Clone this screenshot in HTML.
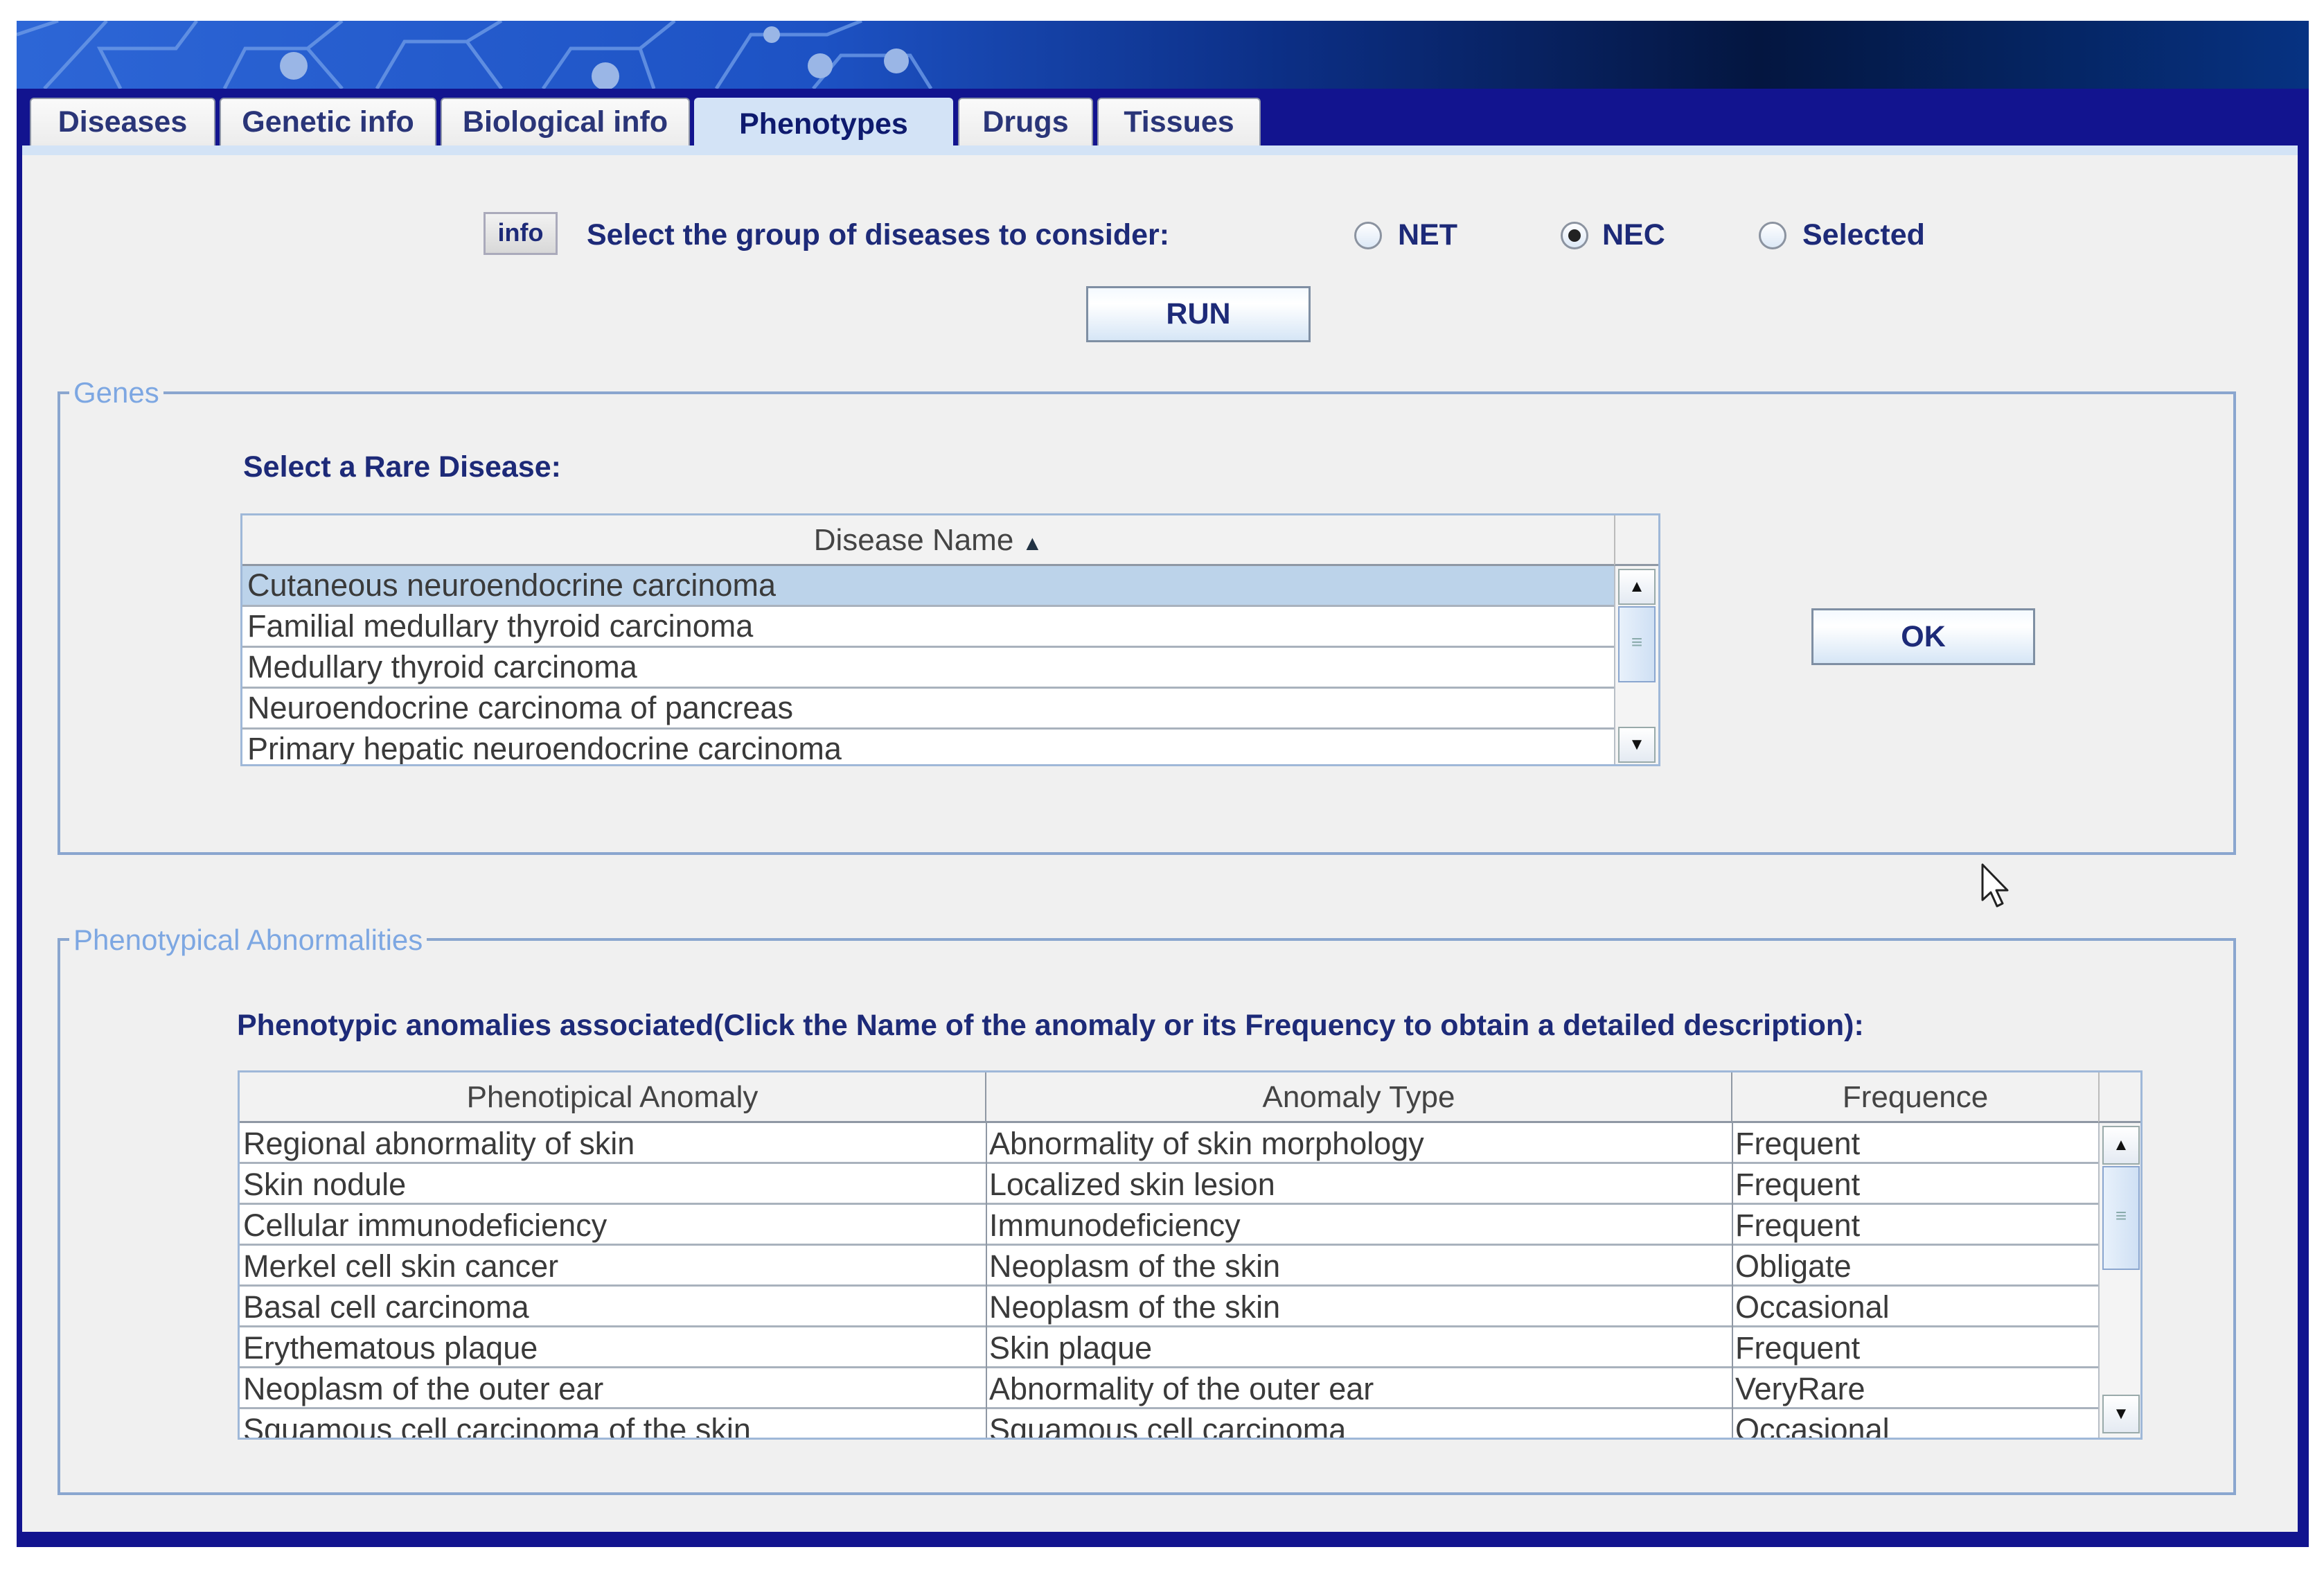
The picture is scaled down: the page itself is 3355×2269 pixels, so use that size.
<!DOCTYPE html>
<html><head><meta charset="utf-8"><style>
*{margin:0;padding:0;box-sizing:border-box}
body{width:3355px;height:2269px;background:#fff;position:relative;overflow:hidden;font-family:"Liberation Sans",Arial,sans-serif}
.a{position:absolute}
.b{font-weight:bold;color:#1d2a78;font-size:43px;white-space:nowrap}
.tab{position:absolute;top:141px;height:69px;background:linear-gradient(#fafafa,#ececec);border:2px solid #8f96a8;border-bottom:none;border-radius:6px 6px 0 0;font-weight:bold;font-size:43px;color:#2a3578;text-align:center;line-height:66px}
.btn{position:absolute;border:3px solid #7f8fa3;background:linear-gradient(#f4f9ff,#ffffff 30%,#d6e6f6);font-weight:bold;color:#1d2a78;text-align:center}
.fs{position:absolute;border:4px solid #8aa6cf}
.lg{position:absolute;background:#f0f0f0;color:#7da7e2;font-size:42px;padding:0 6px;white-space:nowrap;line-height:42px}
.tbl{position:absolute;background:#fff;border:3px solid #9fb8d8}
.row{position:absolute;left:0;height:59px;border-bottom:3px solid #a9b2bd;font-size:45px;color:#3a3a3a;line-height:56px;white-space:nowrap;overflow:hidden}
.hd{position:absolute;top:0;height:73px;background:#f2f2f2;border-bottom:3px solid #8f98a4;font-size:44px;color:#444;text-align:center;line-height:72px}
.sb{position:absolute;background:#f4f4f4;border-left:2px solid #b8bec6}
.radio{position:absolute;width:40px;height:40px;border-radius:50%;border:3px solid #8b93a0;background:linear-gradient(#fff,#dce8f6)}
.col{position:absolute;top:0;font-size:45px;color:#3a3a3a;line-height:59px;white-space:nowrap}
</style></head><body>
<div class="a" style="left:24px;top:30px;width:3309px;height:2203px;background:#12148f"></div>
<svg class="a" style="left:24px;top:30px" width="3309" height="98">
<defs><linearGradient id="g" x1="0" x2="1"><stop offset="0" stop-color="#2d66d6"/><stop offset="0.35" stop-color="#1d52c4"/><stop offset="0.55" stop-color="#0c2f86"/><stop offset="0.76" stop-color="#041640"/><stop offset="1" stop-color="#063282"/></linearGradient></defs>
<rect width="3309" height="98" fill="url(#g)"/>
<g stroke="#6d9ae6" stroke-width="5" fill="none" opacity="0.8">
<path d="M0 20 L60 0 M40 98 L130 0 M150 98 L120 40 L230 40 L260 0 M300 98 L330 40 L420 40 L470 0 M420 40 L470 98 M520 98 L560 30 L650 30 L700 0 M650 30 L700 98 M760 98 L800 40 L900 40 L950 0 M900 40 L920 98 M1010 98 L1060 20 L1170 20 L1220 0 M1150 98 L1190 50 L1290 50 L1320 98"/>
</g>
<g fill="#9ab6e6"><circle cx="400" cy="65" r="20"/><circle cx="850" cy="80" r="20"/><circle cx="1160" cy="65" r="18"/><circle cx="1270" cy="58" r="18"/><circle cx="1090" cy="20" r="12"/></g>
</svg>
<div class="a" style="left:32px;top:210px;width:3285px;height:2001px;background:#f0f0f0"></div>
<div class="a" style="left:32px;top:210px;width:3285px;height:14px;background:#d3e3f6"></div>
<div class="tab" style="left:43px;width:268px">Diseases</div>
<div class="tab" style="left:317px;width:313px">Genetic info</div>
<div class="tab" style="left:636px;width:360px">Biological info</div>
<div class="tab" style="left:1002px;width:374px;top:141px;height:83px;line-height:72px;background:#d3e3f6;color:#0e1a6e;border-color:#d3e3f6">Phenotypes</div>
<div class="tab" style="left:1383px;width:195px">Drugs</div>
<div class="tab" style="left:1584px;width:236px">Tissues</div>
<div class="btn" style="left:698px;top:306px;width:107px;height:62px;background:linear-gradient(#f2f2f2,#d8d8d8);border-color:#aab;font-size:36px;line-height:54px">info</div>
<div class="a b" style="left:847px;top:315px">Select the group of diseases to consider:</div>
<div class="radio" style="left:1955px;top:320px"></div>
<div class="a b" style="left:2018px;top:315px">NET</div>
<div class="radio" style="left:2253px;top:320px"><div style="position:absolute;left:8px;top:8px;width:18px;height:18px;border-radius:50%;background:#222"></div></div>
<div class="a b" style="left:2313px;top:315px">NEC</div>
<div class="radio" style="left:2539px;top:320px"></div>
<div class="a b" style="left:2602px;top:315px">Selected</div>
<div class="btn" style="left:1568px;top:413px;width:324px;height:81px;font-size:43px;line-height:75px">RUN</div>
<div class="fs" style="left:83px;top:565px;width:3145px;height:669px"></div>
<div class="lg" style="left:100px;top:546px">Genes</div>
<div class="a b" style="left:351px;top:650px">Select a Rare Disease:</div>
<div class="tbl" style="left:347px;top:741px;width:2050px;height:365px;overflow:hidden">
<div class="hd" style="left:0;width:1980px">Disease Name <span style="font-size:30px;color:#234">&#9650;</span></div>
<div class="a" style="left:1980px;top:0;width:64px;height:73px;background:#f2f2f2;border-left:2px solid #bbb;border-bottom:3px solid #8f98a4"></div>
<div class="row" style="top:73px;width:1980px;background:#bcd3ea;padding-left:7px">Cutaneous neuroendocrine carcinoma</div>
<div class="row" style="top:132px;width:1980px;padding-left:7px">Familial medullary thyroid carcinoma</div>
<div class="row" style="top:191px;width:1980px;padding-left:7px">Medullary thyroid carcinoma</div>
<div class="row" style="top:250px;width:1980px;padding-left:7px">Neuroendocrine carcinoma of pancreas</div>
<div class="row" style="top:309px;width:1980px;padding-left:7px;border:none">Primary hepatic neuroendocrine carcinoma</div>
<div class="sb" style="left:1980px;top:73px;width:64px;height:290px">
<div class="a" style="left:4px;top:4px;width:54px;height:52px;border:2px solid #9aa;background:linear-gradient(#fff,#e4eaf2);text-align:center;font-size:24px;line-height:48px;color:#111">&#9650;</div>
<div class="a" style="left:4px;top:58px;width:54px;height:110px;border:2px solid #8aa6cf;background:linear-gradient(90deg,#e8f1fb,#cfe0f4);text-align:center;font-size:28px;line-height:100px;color:#8aa">&#8801;</div>
<div class="a" style="left:4px;top:232px;width:54px;height:52px;border:2px solid #9aa;background:linear-gradient(#fff,#e4eaf2);text-align:center;font-size:24px;line-height:48px;color:#111">&#9660;</div>
</div>
</div>
<div class="btn" style="left:2615px;top:878px;width:323px;height:82px;font-size:43px;line-height:76px">OK</div>
<svg class="a" style="left:2858px;top:1245px" width="50" height="70"><path d="M4 3 L4 54 L16 43 L25 63 L33 59 L24 40 L40 40 Z" fill="#fff" stroke="#222" stroke-width="3" stroke-linejoin="round"/></svg>
<div class="fs" style="left:83px;top:1354px;width:3145px;height:804px"></div>
<div class="lg" style="left:100px;top:1336px">Phenotypical Abnormalities</div>
<div class="a b" style="left:342px;top:1456px;font-size:43px">Phenotypic anomalies associated(Click the Name of the anomaly or its Frequency to obtain a detailed description):</div>
<div class="tbl" style="left:343px;top:1545px;width:2750px;height:533px;overflow:hidden">
<div class="hd" style="left:0;width:1078px;border-right:2px solid #8f98a4">Phenotipical Anomaly</div>
<div class="hd" style="left:1078px;width:1077px;border-right:2px solid #8f98a4">Anomaly Type</div>
<div class="hd" style="left:2155px;width:528px">Frequence</div>
<div class="a" style="left:2683px;top:0;width:64px;height:73px;background:#f2f2f2;border-left:2px solid #bbb;border-bottom:3px solid #8f98a4"></div>
<div class="a" style="left:0;top:73px;width:2683px">
<div class="row" style="top:0;width:2683px"></div>
<div class="row" style="top:59px;width:2683px"></div>
<div class="row" style="top:118px;width:2683px"></div>
<div class="row" style="top:177px;width:2683px"></div>
<div class="row" style="top:236px;width:2683px"></div>
<div class="row" style="top:295px;width:2683px"></div>
<div class="row" style="top:354px;width:2683px"></div>
<div class="a" style="left:1077px;top:0;width:2px;height:460px;background:#8f98a4"></div>
<div class="a" style="left:2154px;top:0;width:2px;height:460px;background:#8f98a4"></div>
<div class="col" style="left:5px">Regional abnormality of skin<br>Skin nodule<br>Cellular immunodeficiency<br>Merkel cell skin cancer<br>Basal cell carcinoma<br>Erythematous plaque<br>Neoplasm of the outer ear<br>Squamous cell carcinoma of the skin</div>
<div class="col" style="left:1082px">Abnormality of skin morphology<br>Localized skin lesion<br>Immunodeficiency<br>Neoplasm of the skin<br>Neoplasm of the skin<br>Skin plaque<br>Abnormality of the outer ear<br>Squamous cell carcinoma</div>
<div class="col" style="left:2159px">Frequent<br>Frequent<br>Frequent<br>Obligate<br>Occasional<br>Frequent<br>VeryRare<br>Occasional</div>
</div>
<div class="sb" style="left:2683px;top:73px;width:64px;height:460px">
<div class="a" style="left:4px;top:4px;width:54px;height:56px;border:2px solid #9aa;background:linear-gradient(#fff,#e4eaf2);text-align:center;font-size:24px;line-height:52px;color:#111">&#9650;</div>
<div class="a" style="left:4px;top:62px;width:54px;height:150px;border:2px solid #8aa6cf;background:linear-gradient(90deg,#e8f1fb,#cfe0f4);text-align:center;font-size:28px;line-height:140px;color:#8aa">&#8801;</div>
<div class="a" style="left:4px;top:392px;width:54px;height:56px;border:2px solid #9aa;background:linear-gradient(#fff,#e4eaf2);text-align:center;font-size:24px;line-height:52px;color:#111">&#9660;</div>
</div>
</div>
</body></html>
